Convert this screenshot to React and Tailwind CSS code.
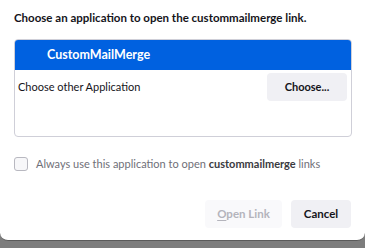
export default function App() {
  return (
    <div className="w-[365px] h-[248px] bg-[#7d7d7d] flex flex-col overflow-hidden" style={{ fontFamily: 'Lato, "Open Sans", sans-serif' }}>
      <div className="h-[241px] shrink-0 bg-white rounded-b-[8px] flex flex-col px-[14px] border-b border-[#5a5a5a]">
        <div className="mt-[10px] h-[16px] flex items-center text-[11.5px] font-bold text-[#15141a] whitespace-nowrap">
          Choose an application to open the custommailmerge link.
        </div>
        <div className="mt-[13px] h-[98px] w-[338px] border border-[#cfcfd8] rounded-[4px] overflow-hidden flex flex-col">
          <div className="h-[30px] shrink-0 bg-[#0061e0] flex items-center pl-[32px] text-[12.5px] font-bold text-white">
            CustomMailMerge
          </div>
          <div className="flex items-center justify-between pl-[3px] pr-[4px] h-[33px] pt-[1px]">
            <span className="text-[11px] text-[#15141a]">Choose other Application</span>
            <button className="w-[80px] h-[28px] rounded-[4px] bg-[#f0f0f4] text-[11px] font-bold text-[#15141a]">
              Choose...
            </button>
          </div>
        </div>
        <div className="mt-[20px] flex items-center gap-[8px] h-[14px]">
          <div className="w-[14px] h-[14px] shrink-0 rounded-[3px] border border-[#b8b8c0] bg-[#f7f7f9]" />
          <span className="text-[11px] text-[#6f6f78] whitespace-nowrap">
            Always use this application to open <span className="font-bold text-[#3a3a40]">custommailmerge</span> links
          </span>
        </div>
        <div className="mt-[29px] flex justify-end gap-[9px]">
          <button className="w-[77px] h-[28px] rounded-[4px] bg-[#f9f9fb] text-[11.5px] font-bold text-[#b4b4bc]">
            <span className="underline underline-offset-2">O</span>pen Link
          </button>
          <button className="w-[60px] h-[28px] rounded-[4px] bg-[#f0f0f4] text-[11.5px] font-bold text-[#15141a]">
            Cancel
          </button>
        </div>
      </div>
    </div>
  );
}
